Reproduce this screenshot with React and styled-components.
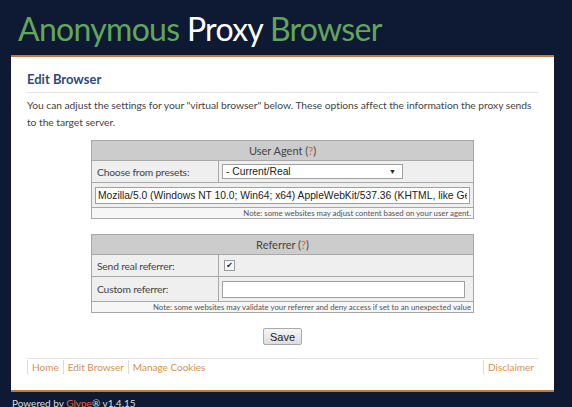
import styled, { createGlobalStyle } from "styled-components";

const GlobalStyle = createGlobalStyle`
  html, body {
    margin: 0;
    padding: 0;
    background: #0e1a33;
  }
  body {
    font-family: Lato, "Open Sans", sans-serif;
    overflow: hidden;
  }
`;

const App = () => {
  return (
    <Page>
      <GlobalStyle />
      <Header>
        <Logo>
          Anonymous <span>Proxy</span> Browser
        </Logo>
      </Header>

      <Panel>
        <Heading>Edit Browser</Heading>
        <Intro>
          You can adjust the settings for your "virtual browser" below. These options affect the information the proxy sends
          to the target server.
        </Intro>

        <OptionsTable>
          <tbody>
            <tr>
              <HeadCell colSpan={2}>
                User Agent (<Help>?</Help>)
              </HeadCell>
            </tr>
            <Row>
              <LabelCell>Choose from presets:</LabelCell>
              <Cell>
                <Select>
                  <span>- Current/Real</span>
                  <Arrow>▼</Arrow>
                </Select>
              </Cell>
            </Row>
            <Row $tall>
              <Cell colSpan={2}>
                <TextBox
                  $wide
                  readOnly
                  value="Mozilla/5.0 (Windows NT 10.0; Win64; x64) AppleWebKit/537.36 (KHTML, like Gecko) Chrome/58.0"
                />
              </Cell>
            </Row>
            <tr>
              <NoteCell colSpan={2}>
                <b>Note:</b> some websites may adjust content based on your user agent.
              </NoteCell>
            </tr>
          </tbody>
        </OptionsTable>

        <OptionsTable>
          <tbody>
            <tr>
              <HeadCell colSpan={2}>
                Referrer (<Help>?</Help>)
              </HeadCell>
            </tr>
            <Row>
              <LabelCell>Send real referrer:</LabelCell>
              <Cell>
                <CheckBox>✔</CheckBox>
              </Cell>
            </Row>
            <Row $tall>
              <LabelCell>Custom referrer:</LabelCell>
              <Cell>
                <TextBox readOnly value="" />
              </Cell>
            </Row>
            <tr>
              <NoteCell colSpan={2}>
                <b>Note:</b> some websites may validate your referrer and deny access if set to an unexpected value
              </NoteCell>
            </tr>
          </tbody>
        </OptionsTable>

        <Actions>
          <SaveButton>Save</SaveButton>
        </Actions>

        <Footer>
          <Links>
            <FootLink>Home</FootLink>
            <FootLink>Edit Browser</FootLink>
            <FootLink>Manage Cookies</FootLink>
          </Links>
          <Links>
            <FootLink>Disclaimer</FootLink>
          </Links>
        </Footer>
      </Panel>

      <Powered>
        Powered by <em>Glype</em>® v1.4.15
      </Powered>
    </Page>
  );
};

export default App;

// styles
const Page = styled.div`
  width: 572px;
  height: 407px;
  overflow: hidden;
`;

const Header = styled.div`
  height: 55px;
  padding-left: 18px;
  box-sizing: border-box;
`;

const Logo = styled.h1`
  margin: 0;
  padding-top: 9px;
  font-family: Lato, sans-serif;
  font-weight: 400;
  font-size: 32px;
  line-height: 40px;
  letter-spacing: -0.7px;
  color: #62a659;

  span {
    color: #ffffff;
  }
`;

const Panel = styled.div`
  margin-left: 11px;
  width: 543px;
  box-sizing: border-box;
  background: #ffffff;
  border-top: 2px solid #c07a3e;
  border-bottom: 2px solid #c07a3e;
  padding: 14px 16px 16px 16px;
`;

const Heading = styled.h2`
  margin: 0;
  padding-bottom: 4px;
  font-size: 13px;
  font-weight: 700;
  line-height: 17px;
  color: #2f4a78;
  border-bottom: 1px solid #e2e2e2;
`;

const Intro = styled.p`
  margin: 4px 0 9px;
  font-size: 10.3px;
  line-height: 17px;
  letter-spacing: -0.05px;
  color: #444;
`;

const OptionsTable = styled.table`
  border-collapse: collapse;
  width: 383px;
  margin: 0 auto 15px;
  border: 1px solid #a8a8a8;
  color: #444;
`;

const HeadCell = styled.th`
  background: #cccccc;
  font-weight: 400;
  font-size: 11px;
  height: 19px;
  padding: 0;
  border: 1px solid #a8a8a8;
  text-align: center;
  color: #444;
`;

const Help = styled.span`
  color: #d2652c;
`;

const Row = styled.tr`
  height: ${(p) => (p.$tall ? "25px" : "22px")};
  background: #efefef;
`;

const Cell = styled.td`
  border: 1px solid #a8a8a8;
  padding: 0 3px;
`;

const LabelCell = styled(Cell)`
  width: 118px;
  padding-left: 5px;
  font-size: 10.3px;
  letter-spacing: -0.2px;
`;

const Select = styled.div`
  width: 181px;
  height: 15px;
  box-sizing: border-box;
  display: flex;
  align-items: center;
  justify-content: space-between;
  padding: 0 6px 0 3px;
  background: #fff;
  border: 1px solid #a0a0a0;
  font-family: "Liberation Sans", Arial, sans-serif;
  font-size: 10.3px;
  color: #222;
`;

const Arrow = styled.span`
  font-size: 7px;
`;

const TextBox = styled.input`
  display: block;
  width: ${(p) => (p.$wide ? "375px" : "243px")};
  height: 17px;
  box-sizing: border-box;
  margin: 0;
  padding: 0 2px;
  border: 1px solid #a0a0a0;
  background: #fff;
  font-family: "Liberation Sans", Arial, sans-serif;
  font-size: 10.3px;
  color: #222;
  outline: none;
`;

const CheckBox = styled.span`
  display: flex;
  align-items: center;
  justify-content: center;
  width: 9px;
  height: 9px;
  margin-left: 2px;
  border: 1px solid #9a9a9a;
  background: #f7f7f7;
  font-family: "DejaVu Sans", sans-serif;
  font-size: 8px;
  line-height: 1;
  color: #222;
`;

const NoteCell = styled.td`
  border: 1px solid #a8a8a8;
  background: #f6f6f6;
  height: 10px;
  padding: 0 2px;
  font-size: 7.8px;
  line-height: 10px;
  text-align: right;
  color: #555;

  b {
    font-weight: 400;
  }
`;

const Actions = styled.div`
  display: flex;
  justify-content: center;
  margin-top: 1px;
  margin-bottom: 13px;
`;

const SaveButton = styled.button`
  height: 17px;
  padding: 0 6px;
  border: 1px solid #aaa;
  border-radius: 2px;
  background: linear-gradient(#f6f6f6, #dedede);
  font-family: "Liberation Sans", Arial, sans-serif;
  font-size: 11px;
  color: #222;
`;

const Footer = styled.div`
  display: flex;
  justify-content: space-between;
  border-top: 1px solid #e2e2e2;
  padding-top: 1px;
`;

const Links = styled.div`
  display: flex;
`;

const FootLink = styled.a`
  border-left: 1px solid #dcdcdc;
  padding: 0 4px;
  font-size: 10px;
  line-height: 14px;
  color: #d4924a;
  cursor: pointer;
`;

const Powered = styled.div`
  padding: 5px 0 0 12px;
  font-size: 10px;
  color: #dcdcdc;

  em {
    font-style: normal;
    color: #e2643a;
  }
`;
